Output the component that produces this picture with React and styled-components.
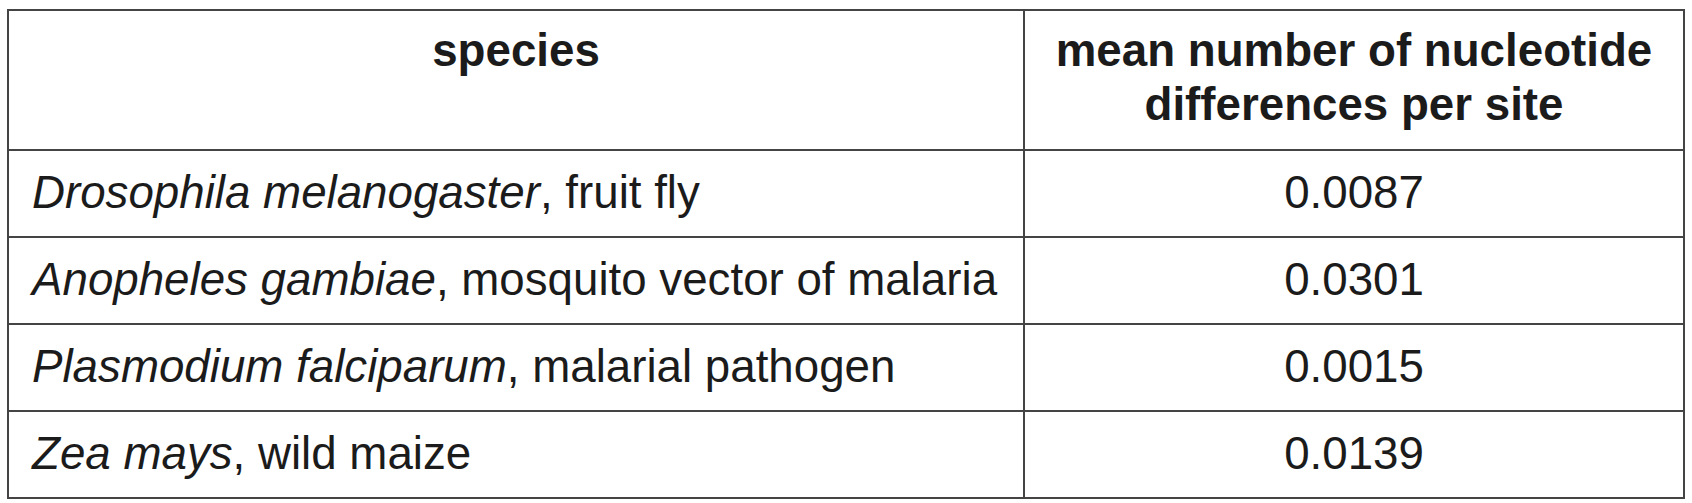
import React from 'react'
import styled, {createGlobalStyle} from 'styled-components'

const GlobalStyle = createGlobalStyle`
  html, body {
    margin: 0;
    padding: 0;
    background: #ffffff;
  }
  body {
    font-family: "Liberation Sans", Arial, sans-serif;
    color: #1b1b1b;
  }
`;

const Wrapper = styled.div`
  padding: 9px 0 0 7px;
`;

const Table = styled.table`
  border-collapse: collapse;
  table-layout: fixed;
  width: 1678px;
  font-size: 45.7px;
  line-height: 54px;
  border: 2px solid #333;
`;

const HeadCell = styled.th`
  font-weight: bold;
  text-align: center;
  vertical-align: top;
  height: 121px;
  padding: 13px 12px 4px;
  border: 2px solid #444;
`;

const Cell = styled.td`
  height: 83px;
  padding: 0 0 2px 23px;
  vertical-align: middle;
  text-align: ${({align}) => align || 'left'};
  padding-left: ${({align}) => (align === 'center' ? '0' : '23px')};
  border: 2px solid #444;
  white-space: nowrap;
`;

const Latin = styled.i`
  font-style: italic;
`;

const rows = [
  {latin: 'Drosophila melanogaster', common: 'fruit fly', value: '0.0087'},
  {latin: 'Anopheles gambiae', common: 'mosquito vector of malaria', value: '0.0301'},
  {latin: 'Plasmodium falciparum', common: 'malarial pathogen', value: '0.0015'},
  {latin: 'Zea mays', common: 'wild maize', value: '0.0139'},
]

export default function App() {
  return (
    <>
      <GlobalStyle />
      <Wrapper>
        <Table>
          <colgroup>
            <col style={{width: 1016}} />
            <col />
          </colgroup>
          <thead>
            <tr>
              <HeadCell>species</HeadCell>
              <HeadCell>mean number of nucleotide differences per site</HeadCell>
            </tr>
          </thead>
          <tbody>
            {rows.map(r => (
              <tr key={r.latin}>
                <Cell>
                  <Latin>{r.latin}</Latin>, {r.common}
                </Cell>
                <Cell align="center">{r.value}</Cell>
              </tr>
            ))}
          </tbody>
        </Table>
      </Wrapper>
    </>
  )
}
